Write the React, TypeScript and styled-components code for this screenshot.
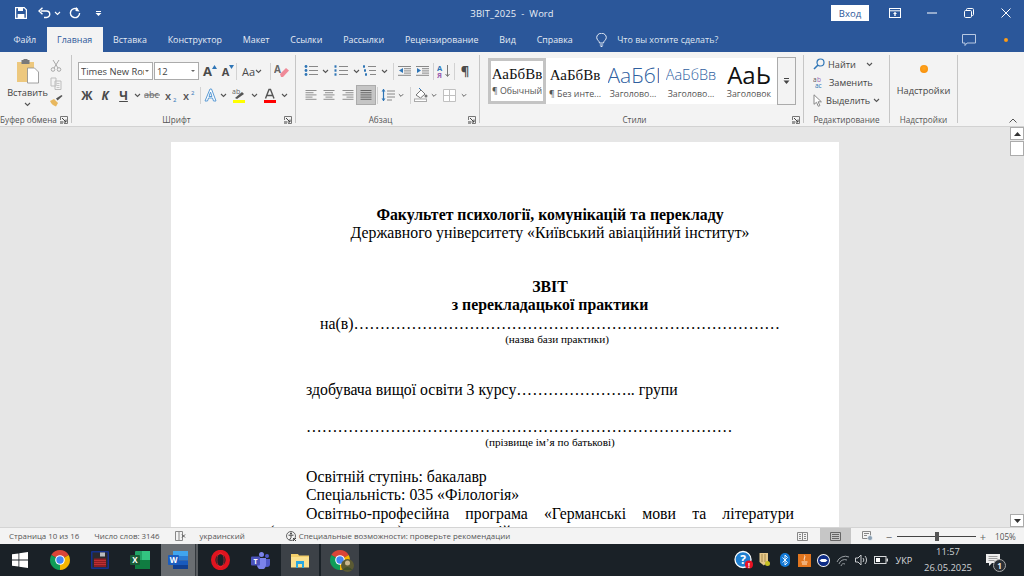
import React from "react";
import styled, { createGlobalStyle } from "styled-components";

const Global = createGlobalStyle`
  html, body { margin: 0; padding: 0; width: 1024px; height: 576px; overflow: hidden; background: #e6e6e6; }
  * { box-sizing: border-box; }
`;
const UI = `"Open Sans", "Noto Sans", sans-serif`;

const Shell = styled.div`
  width: 1024px; height: 576px; display: flex; flex-direction: column; overflow: hidden;
  font-family: ${UI}; color: #444; font-size: 9px;
`;
/* ---------- title bar ---------- */
const TitleBar = styled.header`
  height: 26px; flex: none; background: #2b579a; color: #fff; display: grid;
  grid-template-columns: 1fr auto 1fr; align-items: center;
`;
const Quick = styled.div`display: flex; align-items: center; padding-left: 14px;`;
const QuickBtn = styled.span<{ $w: number }>`
  width: ${p => p.$w}px; height: 16px; display: flex; align-items: center; justify-content: center;
`;
const DocTitle = styled.div`font-size: 9.4px; color: #e9eef6; letter-spacing: .1px;`;
const WinControls = styled.div`display: flex; align-items: center; justify-content: flex-end;`;
const SignIn = styled.button`
  width: 38px; height: 16px; margin-right: 7px; background: #fff; border: 0; padding: 0; color: #2b579a;
  font: 9.5px ${UI};
`;
const WinBtn = styled.span`width: 37px; height: 20px; display: flex; align-items: center; justify-content: center;`;

/* ---------- tabs ---------- */
const TabBar = styled.nav`
  height: 26px; flex: none; background: #2b579a; display: flex; align-items: flex-end; padding-left: 3px;
`;
const Tab = styled.div<{ $active?: boolean }>`
  height: 25px; padding: 0 10.45px; line-height: 25px; font-size: 8.9px; white-space: nowrap;
  color: ${p => (p.$active ? "#2b579a" : "#e6ecf5")}; background: ${p => (p.$active ? "#f3f3f3" : "transparent")};
`;
const TellMe = styled.div`
  height: 25px; display: flex; align-items: center; gap: 10px; margin-left: 13px; color: #dfe6f1; font-size: 8.9px;
`;
const TabEnd = styled.div`margin-left: auto; height: 25px; display: flex; align-items: center;`;
const TabEndBtn = styled.span`width: 37px; display: flex; justify-content: center; align-items: center;`;

/* ---------- ribbon ---------- */
const Ribbon = styled.section`
  height: 75px; flex: none; background: #f3f3f3; border-bottom: 1px solid #d2d2d2; display: flex;
  align-items: flex-start; padding-top: 3px; position: relative;
`;
const Group = styled.div<{ $w: number }>`
  width: ${p => p.$w}px; height: 68px; flex: none; border-right: 1px solid #c6c6c6; display: flex; flex-direction: column;
`;
const GroupBody = styled.div`flex: 1; min-height: 0; display: flex;`;
const GroupFoot = styled.div`
  height: 10px; line-height: 14px; flex: none; display: flex; font-size: 8.2px; color: #555; white-space: nowrap;
`;
const FootText = styled.span`flex: 1; text-align: center;`;
const Launcher = styled.span`display: flex; align-items: center; justify-content: center; width: 14px; height: 14px; flex: none;`;
const Collapse = styled.span`position: absolute; right: 7px; bottom: 3px; display: flex;`;

const Paste = styled.div`
  width: 47px; padding-left: 8px; display: flex; flex-direction: column; align-items: center; padding-top: 4px; font-size: 9.2px; color: #444;
`;
const PasteLabel = styled.span`margin: 2px 0 3px; line-height: 13px;`;
const ToolCol = styled.div`width: 18px; display: flex; flex-direction: column; padding-top: 1px;`;
const Rows = styled.div`
  flex: 1; display: flex; flex-direction: column; padding: 7px 0 0 6px; gap: 6px;
`;
const Row = styled.div`display: flex; align-items: center; height: 18px;`;
const Tool = styled.span<{ $w?: number; $on?: boolean }>`
  width: ${p => p.$w ?? 18}px; height: 18px; flex: none; display: flex; align-items: center; justify-content: center;
  background: ${p => (p.$on ? "#c5c5c5" : "transparent")}; outline: ${p => (p.$on ? "1px solid #ababab" : "none")};
`;
const Glyph = styled.span<{ $s?: number; $weight?: number; $i?: boolean; $u?: boolean }>`
  font-family: ${UI}; font-size: ${p => p.$s ?? 12}px; font-weight: ${p => p.$weight ?? 700}; font-style: ${p => (p.$i ? "italic" : "normal")};
  color: #4a4a4a; text-decoration: ${p => (p.$u ? "underline" : "none")};
`;
const Sep = styled.i<{ $ml?: number }>`
  width: 1px; height: 17px; flex: none; background: #d2d2d2; margin-left: ${p => p.$ml ?? 0}px;
`;
const Combo = styled.div<{ $w: number }>`
  width: ${p => p.$w}px; height: 18px; flex: none; margin-right: 1px; border: 1px solid #ababab; background: #fff; display: flex; align-items: center; justify-content: space-between;
  padding: 0 3px 0 2px; font-size: 9.4px; color: #444; white-space: nowrap; overflow: hidden;
`;
const ComboText = styled.span<{ $w: number }>`width: ${p => p.$w}px; overflow: hidden;`;
const Caret = styled.i`width: 0; height: 0; border: 2px solid transparent; border-top: 2.5px solid #666; border-bottom: 0; flex: none;`;

const Gallery = styled.div`
  margin: 3px 0 0 8px; height: 46px; width: 289px; background: #fff; display: flex; flex: none;
`;
const StyleCard = styled.div<{ $on?: boolean }>`
  width: 58px; flex: none; height: 46px; overflow: hidden; text-align: center; display: flex; flex-direction: column;
  align-items: center; justify-content: flex-end; padding-bottom: 3px; border: ${p => (p.$on ? "3px solid #c4c4c4" : "0")};
`;
const Sample = styled.div<{ $size: number; $serif?: boolean; $blue?: boolean; $light?: boolean }>`
  font-family: ${p => (p.$serif ? `"Liberation Serif", serif` : UI)};
  font-size: ${p => p.$size}px; font-weight: ${p => (p.$light ? 300 : 400)}; color: ${p => (p.$blue ? "#2f5f9f" : "#111")}; line-height: 26px; height: 26px;
  white-space: nowrap; width: 51px; overflow: hidden; text-align: center;
`;
const StyleName = styled.div`font-size: 8.8px; line-height: 13px; color: #555; white-space: nowrap;`;
const GalleryMore = styled.div`
  width: 19px; height: 48px; margin: 2px 0 0 0; flex: none; border: 1px solid #ababab; display: flex; align-items: center; justify-content: center; background: #f3f3f3;
`;
const EditList = styled.div`display: flex; flex-direction: column; padding-left: 9px;`;
const EditRow = styled.div`height: 18px; display: flex; align-items: center; gap: 3px; font-size: 9.2px; color: #444; white-space: nowrap;`;
const AddIn = styled.div`flex: 1; display: flex; flex-direction: column; align-items: center; padding-top: 10px; font-size: 9.2px; gap: 11px;`;
const Dot = styled.i<{ $d: number }>`
  width: ${p => p.$d}px; height: ${p => p.$d}px; border-radius: 50%; background: radial-gradient(circle at 50% 40%, #ffa51f, #f58a07); display: block; flex: none;
`;

/* ---------- document ---------- */
const Workspace = styled.main`flex: 1; min-height: 0; display: flex; background: #e6e6e6;`;
const Canvas = styled.div`flex: 1; min-width: 0; overflow: hidden; padding: 15px 0 0 171px;`;
const Page = styled.article`
  width: 668px; height: 600px; background: #fff; padding: 64px 45px 0 135px;
  font-family: "Liberation Serif", "Times New Roman", serif; color: #000;
`;
const Line = styled.p<{ $top?: number; $center?: boolean; $bold?: boolean; $small?: boolean; $just?: boolean; $left?: number }>`
  margin: ${p => p.$top ?? 0}px 0 0 ${p => p.$left ?? 0}px; white-space: ${p => (p.$just ? "normal" : "nowrap")};
  text-align: ${p => (p.$center ? "center" : p.$just ? "justify" : "left")};
  text-align-last: ${p => (p.$just ? "justify" : "auto")};
  font-weight: ${p => (p.$bold ? 700 : 400)}; font-size: ${p => (p.$small ? "11.2px" : "15.8px")}; line-height: ${p => (p.$small ? "13px" : "18.4px")};
`;
const Scroll = styled.aside`
  width: 14px; flex: none; margin-left: 2px; background: #e6e6e6; display: flex; flex-direction: column;
`;
const ScrollBtn = styled.div`
  height: 13px; flex: none; background: #fff; border: 1px solid #ababab; display: flex; align-items: center; justify-content: center;
`;
const ScrollThumb = styled.div`height: 15px; margin-top: 1px; flex: none; background: #fff; border: 1px solid #ababab;`;
const ScrollSpace = styled.div`flex: 1;`;

/* ---------- status bar ---------- */
const Status = styled.footer`
  height: 17px; flex: none; background: #f3f3f3; border-top: 1px solid #d4d4d4; display: flex; align-items: center; font-size: 7.9px; color: #555; white-space: nowrap;
`;
const StatusItem = styled.span<{ $ml: number }>`margin-left: ${p => p.$ml}px; display: flex; align-items: center; gap: 2px;`;
const ViewBtn = styled.span<{ $on?: boolean; $w: number }>`
  width: ${p => p.$w}px; height: 16px; display: flex; align-items: center; justify-content: center; background: ${p => (p.$on ? "#c6c6c6" : "transparent")};
`;
const ViewGroup = styled.div`margin-left: auto; display: flex; align-items: center;`;
const ZoomBar = styled.div`width: 79px; height: 1px; background: #444; margin: 0 1px 0 2px; position: relative;`;
const ZoomThumb = styled.i`position: absolute; left: 38px; top: -4px; width: 4px; height: 9px; background: #555;`;
const ZoomSign = styled.span`font-size: 11px; line-height: 11px; width: 12px; text-align: center; color: #666;`;
const ZoomVal = styled.span`width: 35px; text-align: center; padding-right: 2px; font-size: 8.2px;`;

/* ---------- taskbar ---------- */
const Taskbar = styled.div`height: 32px; flex: none; background: #1a2127; display: flex; align-items: center; color: #d8dadc;`;
const AppBtn = styled.div<{ $state?: "open" | "active" }>`
  width: 40px; height: 32px; flex: none; display: flex; align-items: center; justify-content: center;
  padding-right: ${p => (p.$state === "active" ? 4 : 0)}px;
  background: ${p =>
    p.$state === "active"
      ? "linear-gradient(to right, #6a6e72 0 34px, #33383d 34px 35px, #585c60 35px 37px, #1a2127 37px)"
      : p.$state === "open"
        ? "#3c4147"
        : "transparent"};
  border-left: 1px solid #1a2127; border-right: 1px solid #1a2127;
`;
const Tray = styled.div`margin-left: auto; height: 32px; display: flex; align-items: center; padding-right: 20px;`;
const TrayItem = styled.span<{ $w: number }>`
  width: ${p => p.$w}px; height: 32px; flex: none; display: flex; align-items: center; justify-content: center; font-size: 9.2px; position: relative;
`;
const Clock = styled.div`width: 68px; text-align: center; font-size: 9.4px; line-height: 16px; color: #d0d3d6;`;
const NotifyBadge = styled.b`
  position: absolute; left: 11px; top: 15px; width: 13px; height: 13px; border-radius: 50%; border: 1px solid #aaa; background: #2a3036; color: #eee; font: 700 8px/11px ${UI}; text-align: center;
`;
const TriMark = styled.svg`align-self: flex-start; margin-top: 3px;`;
const AvatarWrap = styled.span`position: relative; display: flex;`;
const AvatarPatch = styled.svg`position: absolute; right: -4px; bottom: -2px;`;

/* ---------- icons ---------- */
const Chev = ({ c = "#555" }: { c?: string }) => (
  <svg width="7" height="5" viewBox="0 0 7 5"><path d="M1 1l2.500 2.500L6 1" fill="none" stroke={c} strokeWidth="1.100" /></svg>
);
const Launch = () => (
  <svg width="8" height="8" viewBox="0 0 8 8"><path d="M.5 4V.5H7.500V7.500H4" fill="none" stroke="#777" /><path d="M2 2l4 4M3.500 6H6V3.500" fill="none" stroke="#444" /><rect x="0" y="5" width="3" height="3" fill="#999" /></svg>
);
const Lines = ({ a = "left" }: { a?: "left" | "center" | "right" | "just" }) => {
  const widths = [11, 8, 11, 7, 11];
  return (
    <svg width="12" height="12" viewBox="0 0 12 12">
      {widths.map((w, i) => {
        const ww = a === "just" ? 11 : w;
        const x = a === "center" ? 6 - ww / 2 : a === "right" ? 11.500 - ww : .5;
        return <rect key={i} x={x} y={1 + i * 2.200} width={ww} height="1" fill={a === "just" ? "#666" : "#8f8f8f"} />;
      })}
    </svg>
  );
};
const ListIc = ({ kind }: { kind: "b" | "n" | "m" }) => (
  <svg width="14" height="12" viewBox="0 0 14 12">
    {[1.500, 5.500, 9.500].map((y, i) => (
      <g key={y}>
        {kind === "b" ? <circle cx="2" cy={y} r="1.400" fill="#2e75b6" /> : <rect x={kind === "m" ? i : .5} y={y - 1.200} width="2" height="2.400" fill="#2e75b6" />}
        <rect x={kind === "m" ? 5 + i : 5} y={y - .5} width={kind === "m" ? 8 - i : 9} height="1" fill="#888" />
      </g>
    ))}
  </svg>
);
const Indent = ({ out }: { out?: boolean }) => (
  <svg width="13" height="12" viewBox="0 0 13 12">
    {[1, 3.200, 5.400, 7.600, 9.800].map(y => <rect key={y} x={y === 1 || y === 9.800 ? 0 : 6} y={y} width={y === 1 || y === 9.800 ? 13 : 7} height="1" fill="#888" />)}
    <path d={out ? "M5 3v5L1 5.500z" : "M1 3v5l4-2.500z"} fill="#2e75b6" />
  </svg>
);

const SaveIc = () => (
  <svg width="12" height="12" viewBox="0 0 12 12"><path d="M.6.6h8.600l2.200 2.200v8.600H.6z" fill="none" stroke="#fff" strokeWidth="1.200" /><rect x="3" y="1" width="5" height="3" fill="#fff" /><rect x="2.600" y="7" width="6.800" height="4" fill="#fff" /></svg>
);
const UndoIc = () => (
  <svg width="13" height="12" viewBox="0 0 13 12"><path d="M3 4h5.500a3 3 0 0 1 0 6.500H6" fill="none" stroke="#fff" strokeWidth="1.400" /><path d="M4.500 .8L1 4l3.500 3.200" fill="none" stroke="#fff" strokeWidth="1.400" /></svg>
);
const RedoIc = () => (
  <svg width="12" height="12" viewBox="0 0 12 12"><path d="M8.800 2.400A4.600 4.600 0 1 0 10.600 6" fill="none" stroke="#fff" strokeWidth="1.400" /><path d="M6.800 0v4.200H11z" fill="#fff" transform="rotate(8 8 2)" /></svg>
);
const Clip = () => (
  <svg width="24" height="25" viewBox="0 0 24 25">
    <rect x="1" y="3" width="17" height="20" fill="#edc87e" />
    <rect x="5.500" y="1" width="8" height="4" fill="#7a7a7a" /><rect x="7.500" y="0" width="4" height="2" fill="#7a7a7a" />
    <path d="M11.500 9h7l4 4v11h-11z" fill="#fff" stroke="#8a8a8a" strokeWidth=".8" />
  </svg>
);
const Scissors = () => (
  <svg width="12" height="13" viewBox="0 0 12 13"><path d="M3 1l5 8M9 1L4 9" stroke="#a8a8a8" fill="none" strokeWidth="1" /><circle cx="3" cy="10.500" r="1.800" fill="none" stroke="#a8a8a8" /><circle cx="9" cy="10.500" r="1.800" fill="none" stroke="#a8a8a8" /></svg>
);
const CopyIc = () => (
  <svg width="12" height="13" viewBox="0 0 12 13"><path d="M1 1h5v8H1zM5 4h6v8.500H5z" fill="#f3f3f3" stroke="#bdbdbd" /><path d="M6.500 6.500h3M6.500 8.500h3M6.500 10.500h3" stroke="#c8c8c8" /></svg>
);
const Brush = () => (
  <svg width="13" height="12" viewBox="0 0 13 12"><path d="M0 6l4-2 4 4-2 3.500C4 11 1 9 0 6z" fill="#e8b75e" /><path d="M6 3.500l1.500 2L12.500 1 11.500 0z" fill="#555" /></svg>
);
const SmallTri = ({ up }: { up: boolean }) => (
  <TriMark width="5" height="4" viewBox="0 0 5 4"><path d={up ? "M0 4l2.500-4L5 4z" : "M0 0l2.500 4L5 0z"} fill="#2e75b6" /></TriMark>
);
const Eraser = () => (
  <svg width="16" height="14" viewBox="0 0 16 14"><text x="0" y="9" fontSize="10" fontWeight="700" fill="#666" fontFamily="Open Sans">A</text><path d="M6 10l6-6 3 2.500-6 6.500H7z" fill="#ef8a98" /></svg>
);
const Strike = () => (
  <svg width="16" height="10" viewBox="0 0 16 10"><text x="0" y="8" fontSize="9" fill="#666" fontFamily="Open Sans">abc</text><path d="M0 5h16" stroke="#666" /></svg>
);
const Sub = ({ sup }: { sup?: boolean }) => (
  <svg width="14" height="13" viewBox="0 0 14 13"><text x="0" y="11" fontSize="11" fontWeight="600" fill="#555" fontFamily="Open Sans">x</text><text x="8" y={sup ? 6 : 13} fontSize="6" fill="#2e75b6" fontFamily="Open Sans">2</text></svg>
);
const Effect = () => (
  <svg width="13" height="14" viewBox="0 0 13 14"><path d="M1 13L6 1h1.500l4.500 12h-2.500L8.500 10h-4l-1 3zM5 8.500h3L6.500 4z" fill="#fff" stroke="#5b9bd5" strokeWidth="1" /></svg>
);
const Highlight = () => (
  <svg width="14" height="15" viewBox="0 0 14 15"><text x="0" y="6" fontSize="7" fill="#666" fontFamily="Open Sans">ab</text><path d="M3 10l7-6 2 2-7 5z" fill="#555" /><rect x="1" y="12" width="12" height="3" fill="#ffff00" /></svg>
);
const FontColor = () => (
  <svg width="14" height="15" viewBox="0 0 14 15"><path d="M2.500 10.500L6 1.500h1.500L11 10.500M4 7.500h5.500" fill="none" stroke="#555" strokeWidth="1.400" /><rect x="1" y="12" width="12" height="3" fill="#ff0000" /></svg>
);
const Sort = () => (
  <svg width="14" height="14" viewBox="0 0 14 14"><text x="0" y="6.500" fontSize="7.500" fontWeight="700" fill="#2e75b6" fontFamily="Open Sans">А</text><text x="0" y="13.500" fontSize="7.500" fontWeight="700" fill="#9b5fb0" fontFamily="Open Sans">Я</text><path d="M10.500 1v11M8.500 10l2 2.500 2-2.500" fill="none" stroke="#777" /></svg>
);
const Spacing = () => (
  <svg width="14" height="14" viewBox="0 0 14 14"><path d="M2.500 1v12" stroke="#2e75b6" strokeWidth="1.200" /><path d="M.5 3.500L2.500 1l2 2.500zM.5 10.500l2 2.500 2-2.500z" fill="#2e75b6" /><path d="M6 3h8M6 6h8M6 9h8M6 12h5" stroke="#888" /></svg>
);
const Bucket = () => (
  <svg width="14" height="14" viewBox="0 0 14 14"><path d="M2 7l5-5 4 4-4.500 4z" fill="#fff" stroke="#777" /><path d="M5 0l2 2" stroke="#2e75b6" /><circle cx="12" cy="8" r="1.500" fill="#777" /><rect x=".5" y="11" width="12" height="2.500" fill="#fff" stroke="#aaa" /></svg>
);
const Borders = () => (
  <svg width="13" height="13" viewBox="0 0 13 13"><path d="M.5.500h12v12H.5zM6.500.500v12M.5 6.500h12" fill="#fff" stroke="#c0c0c0" /></svg>
);
const Lens = () => (
  <svg width="12" height="12" viewBox="0 0 12 12"><circle cx="7.500" cy="4.500" r="3.500" fill="none" stroke="#2e75b6" strokeWidth="1.200" /><path d="M5 7l-4 4" stroke="#2e75b6" strokeWidth="1.600" /></svg>
);
const ReplaceIc = () => (
  <svg width="13" height="12" viewBox="0 0 13 12"><text x="0" y="5.500" fontSize="6.500" fill="#555" fontFamily="Open Sans">a</text><text x="4" y="5.500" fontSize="6.500" fill="#9b5fb0" fontFamily="Open Sans">b</text><text x="2" y="12" fontSize="6.500" fill="#2e75b6" fontFamily="Open Sans">ac</text></svg>
);
const Arrow = () => (
  <svg width="10" height="13" viewBox="0 0 10 13"><path d="M1 .8v9.500l2.500-2 1.800 4 1.600-.7-1.800-3.800h3.300z" fill="#fff" stroke="#888" /></svg>
);
const Bulb = () => (
  <svg width="11" height="14" viewBox="0 0 11 14"><path d="M3.500 10c0-2-2.800-3-2.800-5.400a4.800 4.400 0 0 1 9.600 0C10.300 7 7.500 8 7.500 10zM3.800 12h3.400M4.600 13.500h1.800" fill="none" stroke="#e6ecf5" /></svg>
);
const Bubble = () => (
  <svg width="14" height="12" viewBox="0 0 14 12"><path d="M.5.500h13v8.500H5L3 11.500V9H.5z" fill="none" stroke="#b9c9e2" /></svg>
);
const RibbonDisp = () => (
  <svg width="12" height="10" viewBox="0 0 12 10"><rect x=".5" y=".5" width="11" height="9" fill="none" stroke="#fff" /><path d="M.5 2.800h11" stroke="#fff" /><path d="M6 3.800L8 6H6.700v2H5.300V6H4z" fill="#fff" /></svg>
);
const WinMin = () => <svg width="10" height="2" viewBox="0 0 10 2"><path d="M0 1h10" stroke="#fff" /></svg>;
const WinMax = () => (
  <svg width="10" height="10" viewBox="0 0 10 10"><rect x=".5" y="2.500" width="7" height="7" rx="1.200" fill="none" stroke="#fff" /><path d="M2.500 2.500V1.600Q2.500.5 3.600.5h4.800q1.100 0 1.100 1.100v4.800q0 1.100-1.100 1.100H7.500" fill="none" stroke="#fff" /></svg>
);
const WinX = () => <svg width="10" height="10" viewBox="0 0 10 10"><path d="M.5.500l9 9M9.500.500l-9 9" stroke="#fff" /></svg>;
const ReadView = () => (
  <svg width="11" height="9" viewBox="0 0 11 9"><path d="M.5.500h10v8H.5zM5.500.500v8M2 2.500h2M2 4.500h2M2 6.500h2M7 2.500h2M7 4.500h2M7 6.500h2" fill="none" stroke="#888" /></svg>
);
const PrintView = () => (
  <svg width="11" height="9" viewBox="0 0 11 9"><path d="M.5.500h10v8H.5zM2 2.500h7M2 4.500h7M2 6.500h7" fill="none" stroke="#666" /></svg>
);
const WebView = () => (
  <svg width="11" height="10" viewBox="0 0 11 10"><path d="M.5.500h8v7h-8zM2 2.500h5M2 4.500h3" fill="none" stroke="#888" /><circle cx="8" cy="7" r="2.500" fill="#8aa0b4" stroke="#fff" strokeWidth=".6" /></svg>
);
const BookMark = () => (
  <svg width="11" height="10" viewBox="0 0 11 10"><path d="M.5.500h7v9h-7zM4 .500v9" fill="none" stroke="#888" /><path d="M7 3.500l3 3M10 3.500l-3 3" stroke="#555" /></svg>
);
const Access = () => (
  <svg width="12" height="12" viewBox="0 0 12 12"><circle cx="6" cy="6" r="4.500" fill="none" stroke="#666" /><circle cx="6" cy="3.500" r="1" fill="#444" /><path d="M3.500 5.200h5M6 5.500v2M6 7.500L4.500 10M8 8l3 3M11 8l-3 3" stroke="#444" fill="none" /></svg>
);

/* taskbar marks */
const Windows = () => (
  <svg width="16" height="16" viewBox="0 0 16 16"><path d="M0 2.300L6.500 1.400v6.100H0zM7.300 1.300L16 0v7.500H7.300zM0 8.400h6.500v6.200L0 13.700zM7.300 8.400H16V16l-8.700-1.300z" fill="#fff" /></svg>
);
const Chrome = ({ d = 20 }: { d?: number }) => (
  <svg width={d} height={d} viewBox="0 0 20 20">
    <path d="M10 10L1.340 5A10 10 0 0 1 18.660 5z" fill="#db4437" />
    <path d="M10 10L18.660 5A10 10 0 0 1 10 20z" fill="#f4b400" />
    <path d="M10 10L10 20A10 10 0 0 1 1.340 5z" fill="#0f9d58" />
    <circle cx="10" cy="10" r="4.800" fill="#fff" /><circle cx="10" cy="10" r="3.700" fill="#4285f4" />
  </svg>
);
const Disk = () => (
  <svg width="18" height="18" viewBox="0 0 18 18"><rect width="18" height="18" rx="1" fill="#14308c" /><rect x="1.500" y="1.500" width="15" height="15" fill="#2a2a2e" /><rect x="9" y="1.500" width="5" height="4" fill="#b9bcc0" /><rect x="3" y="7.500" width="12" height="8.500" fill="#8e1d22" /><path d="M3 9.500h12M3 11.500h12M3 13.500h12" stroke="#d23a3a" strokeWidth=".7" /></svg>
);
const Excel = () => (
  <svg width="20" height="18" viewBox="0 0 20 18"><rect x="5" y="0" width="15" height="18" rx="1" fill="#21a366" /><rect x="12" y="0" width="8" height="9" fill="#33c481" /><rect x="5" y="9" width="15" height="9" fill="#107c41" /><rect x="0" y="4" width="10" height="10" rx="1" fill="#185c37" /><text x="5" y="12" fontSize="8" fontWeight="700" textAnchor="middle" fill="#fff" fontFamily="Open Sans">X</text></svg>
);
const WordMark = () => (
  <svg width="20" height="18" viewBox="0 0 20 18"><rect x="5" y="0" width="15" height="5" fill="#41a5ee" /><rect x="5" y="5" width="15" height="4.500" fill="#2b7cd3" /><rect x="5" y="9.500" width="15" height="4.500" fill="#185abd" /><rect x="5" y="14" width="15" height="4" fill="#103f91" /><rect x="0" y="4" width="11" height="10" rx="1" fill="#1a5dc0" /><text x="5.500" y="12" fontSize="8" fontWeight="700" textAnchor="middle" fill="#fff" fontFamily="Open Sans">W</text></svg>
);
const Opera = () => (
  <svg width="19" height="20" viewBox="0 0 19 20"><ellipse cx="9.500" cy="10" rx="7.300" ry="8" fill="none" stroke="#e0141f" strokeWidth="4.400" /><ellipse cx="9.500" cy="10" rx="3.600" ry="7" fill="none" stroke="#ff3a3f" strokeWidth=".5" /></svg>
);
const Teams = () => (
  <svg width="19" height="17" viewBox="0 0 19 17"><circle cx="10.500" cy="2.500" r="2.500" fill="#7b83eb" /><circle cx="16" cy="4" r="2" fill="#5059c9" /><path d="M13 7h6v5a3 3 0 0 1-6 0z" fill="#5059c9" /><path d="M6 6h9v7a4 4 0 0 1-9 0z" fill="#7b83eb" /><rect x="0" y="4.500" width="9" height="9" rx="1" fill="#4b53bc" /><text x="4.500" y="11.500" fontSize="7" fontWeight="700" textAnchor="middle" fill="#fff" fontFamily="Open Sans">T</text></svg>
);
const Folder = () => (
  <svg width="18" height="15" viewBox="0 0 18 15"><path d="M0 1h7l1 1.500h10V14H0z" fill="#f4cf6b" /><rect y="4" width="18" height="10.500" fill="#fbe08e" /><path d="M5 8h8v7h-2v-4H7v4H5z" fill="#29a8e2" /></svg>
);
const ChromeAvatar = () => (
  <AvatarWrap>
    <Chrome />
    <AvatarPatch width="13" height="13" viewBox="0 0 13 13"><circle cx="6.500" cy="6.500" r="6.500" fill="#5b5a33" /><circle cx="6.500" cy="4" r="2.500" fill="#c9b78f" /><path d="M1.500 11q5-6 10 0z" fill="#3f4f2a" /></AvatarPatch>
  </AvatarWrap>
);

const Help = () => (
  <svg width="20" height="20" viewBox="0 0 20 20"><circle cx="9" cy="9.500" r="8" fill="#1f7fd0" stroke="#fff" strokeWidth="1.300" /><text x="9" y="14" fontSize="12" fontWeight="700" textAnchor="middle" fill="#fff" fontFamily="Open Sans">?</text><circle cx="15" cy="14.500" r="4" fill="#e81123" /><text x="15" y="17.500" fontSize="7" fontWeight="700" textAnchor="middle" fill="#fff" fontFamily="Open Sans">!</text></svg>
);
const Shield = () => (
  <svg width="12" height="14" viewBox="0 0 12 14"><path d="M.5 0h8.500v9l-4.200 3.500L.5 9z" fill="#e4c78a" /><path d="M3 1v8M6 1v8" stroke="#a88a4a" /><circle cx="8.500" cy="10.500" r="2.500" fill="#c7c023" /></svg>
);
const Bt = () => (
  <svg width="10" height="14" viewBox="0 0 10 14"><rect width="10" height="14" rx="5" fill="#1379d6" /><path d="M2.500 4.500l5 5L5 12V2l2.500 2.500-5 5" fill="none" stroke="#fff" strokeWidth=".9" /></svg>
);
const Java = () => (
  <svg width="13" height="13" viewBox="0 0 13 13"><rect width="13" height="13" fill="#e2761f" /><path d="M6.500 1.500c1.500 2-1.500 3 0 5M3.500 8h6M4 10h5" fill="none" stroke="#fbe6d2" strokeWidth="1" /></svg>
);
const TV = () => (
  <svg width="13" height="13" viewBox="0 0 13 13"><circle cx="6.500" cy="6.500" r="6.500" fill="#fff" /><circle cx="6.500" cy="6.500" r="5.500" fill="#0e2c86" /><path d="M2.500 6.500l2-1.500h4l2 1.500-2 1.500h-4z" fill="#fff" /></svg>
);
const Wifi = () => (
  <svg width="14" height="13" viewBox="0 0 14 13"><path d="M1 8a9 9 0 0 1 12-5M3 10a6 6 0 0 1 8-4M5 12a3 3 0 0 1 4-2" fill="none" stroke="#9aa0a5" strokeWidth="1" /></svg>
);
const Vol = () => (
  <svg width="13" height="12" viewBox="0 0 13 12"><path d="M.5 4h2.500l3-3v10l-3-3H.5z" fill="none" stroke="#c8cbce" /><path d="M8 4a3 3 0 0 1 0 4M10 2a6 6 0 0 1 0 8" fill="none" stroke="#c8cbce" /></svg>
);
const Battery = () => (
  <svg width="14" height="8" viewBox="0 0 14 8"><rect x=".5" y=".5" width="11.500" height="7" fill="none" stroke="#d8dadc" /><rect x="2" y="2" width="4" height="4" fill="#fff" /><rect x="12.500" y="2.500" width="1.500" height="3" fill="#d8dadc" /></svg>
);
const Notify = () => (
  <svg width="14" height="13" viewBox="0 0 14 13"><path d="M0 0h14v9H6l-3 3V9H0z" fill="#eee" /><path d="M2.500 2.500h9M2.500 4.500h9M2.500 6.500h6" stroke="#888" strokeWidth=".8" /></svg>
);

const tabs = ["Вставка", "Конструктор", "Макет", "Ссылки", "Рассылки", "Рецензирование", "Вид", "Справка"];
const dots = (n: number, t = "") => "…".repeat(n) + t;

export default function App() {
  return (
    <Shell>
      <Global />
      <TitleBar>
        <Quick>
          <QuickBtn $w={14}><SaveIc /></QuickBtn>
          <QuickBtn $w={8} />
          <QuickBtn $w={16}><UndoIc /></QuickBtn>
          <QuickBtn $w={11}><Chev c="#fff" /></QuickBtn>
          <QuickBtn $w={24}><RedoIc /></QuickBtn>
          <QuickBtn $w={22}><svg width="7" height="5" viewBox="0 0 7 5"><path d="M.5 2h6l-3 3z" fill="#fff" /><path d="M1 .5h5" stroke="#fff" /></svg></QuickBtn>
        </Quick>
        <DocTitle>ЗВІТ_2025&nbsp; - &nbsp;Word</DocTitle>
        <WinControls>
          <SignIn>Вход</SignIn>
          <WinBtn><RibbonDisp /></WinBtn>
          <WinBtn><WinMin /></WinBtn>
          <WinBtn><WinMax /></WinBtn>
          <WinBtn><WinX /></WinBtn>
        </WinControls>
      </TitleBar>

      <TabBar>
        <Tab>Файл</Tab>
        <Tab $active>Главная</Tab>
        {tabs.map(t => <Tab key={t}>{t}</Tab>)}
        <TellMe><Bulb />Что вы хотите сделать?</TellMe>
        <TabEnd>
          <TabEndBtn><Bubble /></TabEndBtn>
          <TabEndBtn><Dot $d={4} /></TabEndBtn>
        </TabEnd>
      </TabBar>

      <Ribbon>
        <Group $w={72}>
          <GroupBody>
            <Paste><Clip /><PasteLabel>Вставить</PasteLabel><Chev /></Paste>
            <ToolCol>
              <Tool><Scissors /></Tool>
              <Tool><CopyIc /></Tool>
              <Tool><Brush /></Tool>
            </ToolCol>
          </GroupBody>
          <GroupFoot><FootText>Буфер обмена</FootText><Launcher><Launch /></Launcher></GroupFoot>
        </Group>

        <Group $w={224}>
          <GroupBody>
            <Rows>
              <Row>
                <Combo $w={75}><ComboText $w={63}>Times New Roman</ComboText><Caret /></Combo>
                <Combo $w={45}><span>12</span><Caret /></Combo>
                <Tool $w={20}><Glyph $s={13}>A</Glyph><SmallTri up /></Tool>
                <Tool $w={16}><Glyph $s={11}>A</Glyph><SmallTri up={false} /></Tool>
                <Sep />
                <Tool $w={30}><Glyph $s={11} $weight={400}>Aa</Glyph><Chev /></Tool>
                <Sep $ml={3} />
                <Tool $w={22}><Eraser /></Tool>
              </Row>
              <Row>
                <Tool><Glyph>Ж</Glyph></Tool>
                <Tool><Glyph $i>К</Glyph></Tool>
                <Tool $w={19}><Glyph $u>Ч</Glyph></Tool>
                <Tool $w={8}><Chev /></Tool>
                <Tool $w={21}><Strike /></Tool>
                <Tool $w={19}><Sub /></Tool>
                <Tool><Sub sup /></Tool>
                <Sep $ml={1} />
                <Tool $w={18}><Effect /></Tool>
                <Tool $w={9}><Chev /></Tool>
                <Tool $w={22}><Highlight /></Tool>
                <Tool $w={9}><Chev /></Tool>
                <Tool $w={22}><FontColor /></Tool>
                <Tool $w={7}><Chev /></Tool>
              </Row>
            </Rows>
          </GroupBody>
          <GroupFoot><FootText>Шрифт</FootText><Launcher><Launch /></Launcher></GroupFoot>
        </Group>

        <Group $w={184}>
          <GroupBody>
            <Rows>
              <Row>
                <Tool><ListIc kind="b" /></Tool>
                <Tool $w={10}><Chev /></Tool>
                <Tool $w={22}><ListIc kind="n" /></Tool>
                <Tool $w={8}><Chev /></Tool>
                <Tool $w={20}><ListIc kind="m" /></Tool>
                <Tool $w={8}><Chev /></Tool>
                <Sep $ml={5} />
                <Tool $w={20}><Indent out /></Tool>
                <Tool $w={16}><Indent /></Tool>
                <Sep $ml={3} />
                <Tool $w={20}><Sort /></Tool>
                <Sep />
                <Tool $w={20}><Glyph $s={13}>¶</Glyph></Tool>
              </Row>
              <Row>
                <Tool><Lines /></Tool>
                <Tool><Lines a="center" /></Tool>
                <Tool $w={19}><Lines a="right" /></Tool>
                <Tool $on><Lines a="just" /></Tool>
                <Sep $ml={2} />
                <Tool $w={20}><Spacing /></Tool>
                <Tool $w={6}><Chev /></Tool>
                <Sep $ml={6} />
                <Tool $w={20}><Bucket /></Tool>
                <Tool $w={6}><Chev /></Tool>
                <Tool $w={24}><Borders /></Tool>
                <Tool $w={6}><Chev /></Tool>
              </Row>
            </Rows>
          </GroupBody>
          <GroupFoot><FootText>Абзац</FootText><Launcher><Launch /></Launcher></GroupFoot>
        </Group>

        <Group $w={324}>
          <GroupBody>
            <Gallery>
              <StyleCard $on><Sample $size={15} $serif>АаБбВв</Sample><StyleName>¶ Обычный</StyleName></StyleCard>
              <StyleCard><Sample $size={15} $serif>АаБбВв</Sample><StyleName>¶ Без инте...</StyleName></StyleCard>
              <StyleCard><Sample $size={21} $blue $light>АаБбI</Sample><StyleName>Заголово...</StyleName></StyleCard>
              <StyleCard><Sample $size={14.500} $blue $light>АаБбВв</Sample><StyleName>Заголово...</StyleName></StyleCard>
              <StyleCard><Sample $size={24}>АаЬ</Sample><StyleName>Заголовок</StyleName></StyleCard>
            </Gallery>
            <GalleryMore><svg width="7" height="7" viewBox="0 0 7 7"><path d="M1 .5h5" stroke="#444" /><path d="M.5 2.500h6l-3 3.500z" fill="#444" /></svg></GalleryMore>
          </GroupBody>
          <GroupFoot><FootText>Стили</FootText><Launcher><Launch /></Launcher></GroupFoot>
        </Group>

        <Group $w={86}>
          <GroupBody>
            <EditList>
              <EditRow><Lens />Найти&nbsp;&nbsp;&nbsp;<Chev /></EditRow>
              <EditRow><ReplaceIc />Заменить</EditRow>
              <EditRow><Arrow />Выделить<Chev /></EditRow>
            </EditList>
          </GroupBody>
          <GroupFoot><FootText>Редактирование</FootText></GroupFoot>
        </Group>

        <Group $w={68}>
          <GroupBody>
            <AddIn><Dot $d={8} />Надстройки</AddIn>
          </GroupBody>
          <GroupFoot><FootText>Надстройки</FootText></GroupFoot>
        </Group>
        <Collapse><svg width="8" height="5" viewBox="0 0 8 5"><path d="M.5 4.500L4 1l3.500 3.500" fill="none" stroke="#555" /></svg></Collapse>
      </Ribbon>

      <Workspace>
        <Canvas>
          <Page>
            <Line $center $bold>Факультет психології, комунікацій та перекладу</Line>
            <Line $center>Державного університету «Київський авіаційний інститут»</Line>
            <Line $center $bold $top={35}>ЗВІТ</Line>
            <Line $center $bold>з перекладацької практики</Line>
            <Line $center>на(в){dots(27)}</Line>
            <Line $center $small $left={14}>(назва бази практики)</Line>
            <Line $top={35}>здобувача вищої освіти 3 курсу{dots(7, "..")} групи</Line>
            <Line $top={19}>{dots(27)}</Line>
            <Line $center $small $top={-1}>(прізвище ім’я по батькові)</Line>
            <Line $top={19}>Освітній ступінь: бакалавр</Line>
            <Line>Спеціальність: 035 «Філологія»</Line>
            <Line $just>Освітньо-професійна програма «Германські мови та літератури</Line>
            <Line $left={-37}>(переклад включно), перша – англійська»</Line>
          </Page>
        </Canvas>
        <Scroll>
          <ScrollBtn><svg width="7" height="4" viewBox="0 0 7 4"><path d="M0 4l3.500-4L7 4z" fill="#333" /></svg></ScrollBtn>
          <ScrollThumb />
          <ScrollSpace />
          <ScrollBtn><svg width="7" height="4" viewBox="0 0 7 4"><path d="M0 0l3.500 4L7 0z" fill="#333" /></svg></ScrollBtn>
        </Scroll>
      </Workspace>

      <Status>
        <StatusItem $ml={9}>Страница 10 из 16</StatusItem>
        <StatusItem $ml={15}>Число слов: 3146</StatusItem>
        <StatusItem $ml={15}><BookMark /></StatusItem>
        <StatusItem $ml={14}>украинский</StatusItem>
        <StatusItem $ml={40}><Access />Специальные возможности: проверьте рекомендации</StatusItem>
        <ViewGroup>
          <ViewBtn $w={36}><ReadView /></ViewBtn>
          <ViewBtn $w={31} $on><PrintView /></ViewBtn>
          <ViewBtn $w={32}><WebView /></ViewBtn>
          <ZoomSign>−</ZoomSign>
          <ZoomBar><ZoomThumb /></ZoomBar>
          <ZoomSign>+</ZoomSign>
          <ZoomVal>105%</ZoomVal>
        </ViewGroup>
      </Status>

      <Taskbar>
        <AppBtn><Windows /></AppBtn>
        <AppBtn><Chrome /></AppBtn>
        <AppBtn><Disk /></AppBtn>
        <AppBtn><Excel /></AppBtn>
        <AppBtn $state="active"><WordMark /></AppBtn>
        <AppBtn><Opera /></AppBtn>
        <AppBtn><Teams /></AppBtn>
        <AppBtn $state="open"><Folder /></AppBtn>
        <AppBtn $state="open"><ChromeAvatar /></AppBtn>
        <Tray>
          <TrayItem $w={20}><Help /></TrayItem>
          <TrayItem $w={22}><Shield /></TrayItem>
          <TrayItem $w={18}><Bt /></TrayItem>
          <TrayItem $w={20}><Java /></TrayItem>
          <TrayItem $w={18}><TV /></TrayItem>
          <TrayItem $w={22}><Wifi /></TrayItem>
          <TrayItem $w={14}><Vol /></TrayItem>
          <TrayItem $w={26}><Battery /></TrayItem>
          <TrayItem $w={20}>УКР</TrayItem>
          <Clock>11:57<br />26.05.2025</Clock>
          <TrayItem $w={22}><Notify /><NotifyBadge>1</NotifyBadge></TrayItem>
        </Tray>
      </Taskbar>
    </Shell>
  );
}
